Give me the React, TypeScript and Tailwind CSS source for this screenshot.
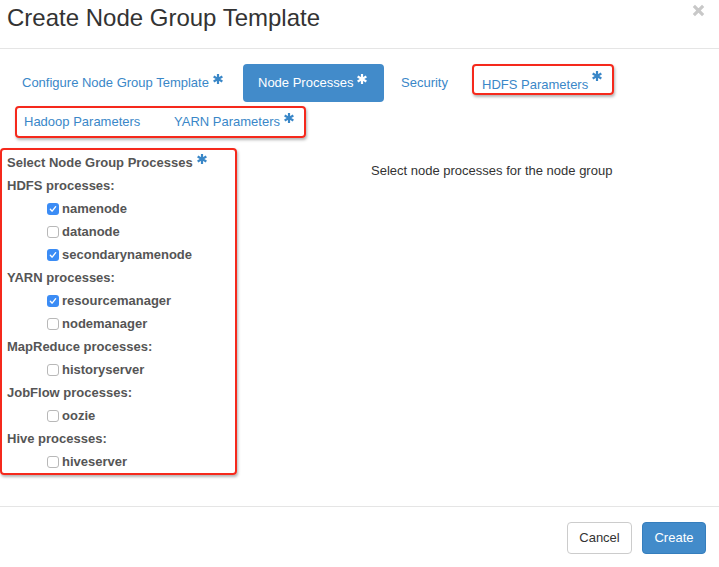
import React from "react";

const Star = () => (
  <svg viewBox="0 0 12 12" className="inline-block w-[10px] h-[10px] ml-[4px] relative -top-[4px] fill-[#3a87c8]">
    <rect x="4.7" y="0" width="2.6" height="12" />
    <rect x="4.7" y="0" width="2.6" height="12" transform="rotate(60 6 6)" />
    <rect x="4.7" y="0" width="2.6" height="12" transform="rotate(120 6 6)" />
  </svg>
);

const WhiteStar = () => (
  <svg viewBox="0 0 12 12" className="inline-block w-[10px] h-[10px] ml-[4px] relative -top-[4px] fill-white">
    <rect x="4.7" y="0" width="2.6" height="12" />
    <rect x="4.7" y="0" width="2.6" height="12" transform="rotate(60 6 6)" />
    <rect x="4.7" y="0" width="2.6" height="12" transform="rotate(120 6 6)" />
  </svg>
);

const Box = ({ checked }: { checked: boolean }) =>
  checked ? (
    <span className="w-[12px] h-[12px] rounded-[3px] bg-[#3b8cf5] flex items-center justify-center">
      <svg viewBox="0 0 12 12" className="w-[10px] h-[10px]" fill="none" stroke="white" strokeWidth="1.6" strokeLinecap="round" strokeLinejoin="round">
        <path d="M2.8 6.3 L5 8.6 L9.2 3.2" />
      </svg>
    </span>
  ) : (
    <span className="w-[12px] h-[12px] rounded-[3px] bg-white border border-[#b8b8b8]" />
  );

const groups: { title: string; items: [string, boolean][] }[] = [
  { title: "HDFS processes:", items: [["namenode", true], ["datanode", false], ["secondarynamenode", true]] },
  { title: "YARN processes:", items: [["resourcemanager", true], ["nodemanager", false]] },
  { title: "MapReduce processes:", items: [["historyserver", false]] },
  { title: "JobFlow processes:", items: [["oozie", false]] },
  { title: "Hive processes:", items: [["hiveserver", false]] },
];

const redBox = "border-2 border-[#f5291c] rounded-[4px] shadow-[1px_2px_3px_rgba(0,0,0,0.3)]";

export default function App() {
  return (
    <div className="w-[719px] h-[567px] bg-white overflow-hidden font-['Liberation_Sans',Arial,sans-serif] flex flex-col">
      {/* Header */}
      <div className="h-[49px] shrink-0 border-b border-[#e5e5e5] flex justify-between items-start pl-[7px] pr-[14px]">
        <h1 className="text-[24px] leading-[26px] mt-[5px] text-[#333]">Create Node Group Template</h1>
        <svg viewBox="0 0 14 14" className="w-[13px] h-[13px] mt-[4px]" stroke="#c8c8c8" strokeWidth="3.4">
          <path d="M2 2 L12 12 M12 2 L2 12" />
        </svg>
      </div>

      {/* Tabs */}
      <div className="mt-[15px] pl-[7px] flex items-start text-[13px] text-[#3a87c8]">
        <div className="w-[236px] h-[38px] pl-[15px] flex items-center">
          Configure Node Group Template
          <Star />
        </div>
        <div className="w-[141px] h-[38px] pl-[15px] flex items-center rounded-[4px] bg-[#428bca] text-white">
          Node Processes
          <WhiteStar />
        </div>
        <div className="w-[88px] h-[38px] pl-[17px] flex items-center">Security</div>
        <div className={`${redBox} w-[142px] h-[31px] pl-[8px] pt-[9px] flex items-start`}>
          HDFS Parameters
          <Star />
        </div>
      </div>
      <div className="mt-[4px] ml-[15px] text-[13px] text-[#3a87c8]">
        <div className={`${redBox} w-[291px] h-[32px] pl-[7px] flex items-center`}>
          <span className="w-[150px]">Hadoop Parameters</span>
          <span>YARN Parameters</span>
          <Star />
        </div>
      </div>

      {/* Body */}
      <div className="mt-[10px] flex items-start">
        <div className={`${redBox} w-[237px] pt-[1px] pl-[5px] text-[13px] font-bold text-[#555]`}>
          <div className="h-[23px] flex items-center">
            Select Node Group Processes
            <Star />
          </div>
          {groups.map((g) => (
            <div key={g.title}>
              <div className="h-[23px] flex items-center">{g.title}</div>
              {g.items.map(([name, checked]) => (
                <div key={name} className="h-[23px] flex items-center pl-[40px] gap-[3px]">
                  <Box checked={checked} />
                  <span>{name}</span>
                </div>
              ))}
            </div>
          ))}
        </div>
        <div className="ml-[134px] mt-[13px] text-[13px] text-[#333]">Select node processes for the node group</div>
      </div>

      {/* Footer */}
      <div className="mt-auto mb-[12px] border-t border-[#e5e5e5] h-[49px] flex justify-end items-start pt-[15px] pr-[13px] gap-[10px] text-[13px]">
        <button className="w-[65px] h-[32px] rounded-[4px] border border-[#ccc] bg-white text-[#333]">Cancel</button>
        <button className="w-[64px] h-[32px] rounded-[4px] border border-[#357ebd] bg-[#428bca] text-white">Create</button>
      </div>
    </div>
  );
}
